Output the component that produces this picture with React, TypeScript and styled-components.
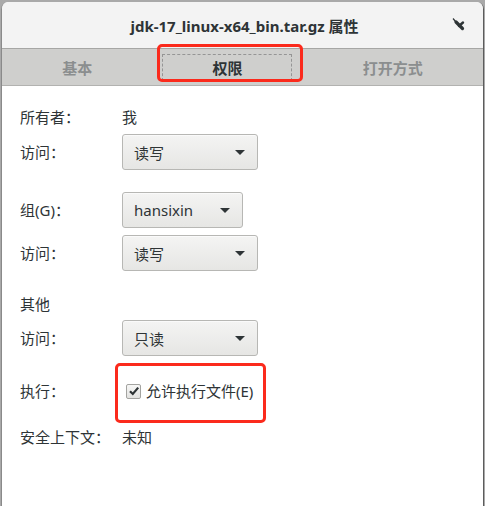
import React from 'react';
import styled, { createGlobalStyle } from 'styled-components';

const GlobalStyle = createGlobalStyle`
  html, body {
    margin: 0;
    padding: 0;
    background: #a9a9a9;
  }
  body {
    font-family: "Noto Sans", "Noto Sans CJK SC", sans-serif;
    color: #2e3436;
  }
`;

interface SelectProps {
  value: string,
  width: number,
}

const Select = ({ value, width }: SelectProps) => (
  <SelectBox $width={width}>
    <SelectText>{value}</SelectText>
    <Arrow />
  </SelectBox>
);

const CloseGlyph = () => (
  <svg width="14" height="14" viewBox="0 0 14 14">
    <path d="M2 1.5 L4.5 4.5" stroke="#2e3436" strokeWidth="1.2" fill="none" />
    <path d="M5 5 L11.5 11.5" stroke="#2e3436" strokeWidth="3.2" strokeLinecap="round" fill="none" />
    <path d="M12 5.5 L8 9" stroke="#2e3436" strokeWidth="2.4" strokeLinecap="round" fill="none" />
  </svg>
);

const CheckMark = () => (
  <svg width="12" height="12" viewBox="0 0 12 12">
    <path d="M2 6.2 L4.8 9 L10.2 2.6" stroke="#2e3436" strokeWidth="2.2" fill="none" />
  </svg>
);

const App = () => (
  <>
    <GlobalStyle />
    <Window>
      <TitleBar>
        <Title>jdk-17_linux-x64_bin.tar.gz 属性</Title>
        <CloseButton><CloseGlyph /></CloseButton>
      </TitleBar>
      <TabBar>
        <Tab>基本</Tab>
        <Tab $active>
          权限
          <FocusRing />
          <Annotation style={{ left: 5, right: 0, top: -5, bottom: 3 }} />
        </Tab>
        <Tab>打开方式</Tab>
      </TabBar>
      <Content>
        <Row>
          <Label>所有者：</Label>
          <Value>我</Value>
        </Row>
        <Row $top={7}>
          <Label>访问：</Label>
          <Select value="读写" width={136} />
        </Row>
        <Row $top={22}>
          <Label>组(G)：</Label>
          <Select value="hansixin" width={121} />
        </Row>
        <Row $top={7}>
          <Label>访问：</Label>
          <Select value="读写" width={136} />
        </Row>
        <Row $top={23}>
          <Label>其他</Label>
        </Row>
        <Row $top={6}>
          <Label>访问：</Label>
          <Select value="只读" width={136} />
        </Row>
        <Row $top={25}>
          <Label>执行：</Label>
          <CheckRow>
            <CheckBox><CheckMark /></CheckBox>
            <Value>允许执行文件(E)</Value>
            <Annotation style={{ left: -7, top: -18, width: 151, height: 60 }} />
          </CheckRow>
        </Row>
        <Row $top={26}>
          <Label>安全上下文：</Label>
          <Value>未知</Value>
        </Row>
      </Content>
    </Window>
  </>
);

export default App;

const Window = styled.div`
  margin: 2px 1px 0 1px;
  height: 504px;
  display: flex;
  flex-direction: column;
  background: #ffffff;
  border-left: 1px solid #8a8a8a;
  border-right: 1px solid #5c5c5c;
  border-radius: 7px 7px 0 0;
  overflow: hidden;
`;

const TitleBar = styled.div`
  position: relative;
  height: 46px;
  flex: 0 0 auto;
  display: flex;
  align-items: center;
  justify-content: center;
  background: #f3f3f3;
`;

const Title = styled.div`
  font-size: 15px;
  font-weight: bold;
  color: #2e3436;
  padding-left: 4px;
`;

const CloseButton = styled.div`
  position: absolute;
  right: 18px;
  top: 15px;
  width: 14px;
  height: 14px;
  display: flex;
`;

const TabBar = styled.div`
  height: 36px;
  flex: 0 0 auto;
  display: flex;
  background: #cfcfcd;
  border-top: 1px solid #a6a6a4;
  border-bottom: 1px solid #b2b2b0;
`;

const Tab = styled.div<{ $active?: boolean }>`
  position: relative;
  flex: 1 1 auto;
  display: flex;
  align-items: center;
  justify-content: center;
  font-size: 15px;
  font-weight: bold;
  color: ${({ $active }) => ($active ? '#2e3436' : '#8b8e8f')};
`;

const FocusRing = styled.span`
  position: absolute;
  left: 10px;
  right: 11px;
  top: 5px;
  bottom: 4px;
  border: 1px dashed #959595;
`;

const Annotation = styled.span`
  position: absolute;
  box-sizing: border-box;
  border: 3px solid #fb2a1c;
  border-radius: 5px;
  pointer-events: none;
`;

const Content = styled.div`
  display: flex;
  flex-direction: column;
  padding: 21px 0 0 18px;
`;

const Row = styled.div<{ $top?: number }>`
  display: grid;
  grid-template-columns: 102px auto;
  align-items: center;
  justify-items: start;
  min-height: 20px;
  margin-top: ${({ $top }) => $top ?? 0}px;
`;

const Label = styled.div`
  font-size: 15px;
  line-height: 20px;
  color: #2e3436;
`;

const Value = styled.div`
  font-size: 15px;
  line-height: 20px;
  color: #2e3436;
`;

const SelectBox = styled.div<{ $width: number }>`
  box-sizing: border-box;
  width: ${({ $width }) => $width}px;
  height: 36px;
  display: flex;
  align-items: center;
  justify-content: space-between;
  padding: 0 12px 0 11px;
  border: 1px solid #b7b7b4;
  border-radius: 3px;
  background: linear-gradient(#f4f4f3, #e6e6e4);
  box-shadow: inset 0 1px #fafafa;
`;

const SelectText = styled.span`
  font-size: 15px;
  color: #2e3436;
`;

const Arrow = styled.span`
  width: 0;
  height: 0;
  border-left: 5px solid transparent;
  border-right: 5px solid transparent;
  border-top: 5px solid #2e3436;
`;

const CheckRow = styled.div`
  position: relative;
  display: flex;
  align-items: center;
  gap: 5px;
  padding-left: 4px;
`;

const CheckBox = styled.span`
  box-sizing: border-box;
  width: 15px;
  height: 15px;
  display: flex;
  align-items: center;
  justify-content: center;
  border: 1px solid #a3a3a0;
  border-radius: 2px;
  background: linear-gradient(#f7f7f6, #e2e2e0);
`;
